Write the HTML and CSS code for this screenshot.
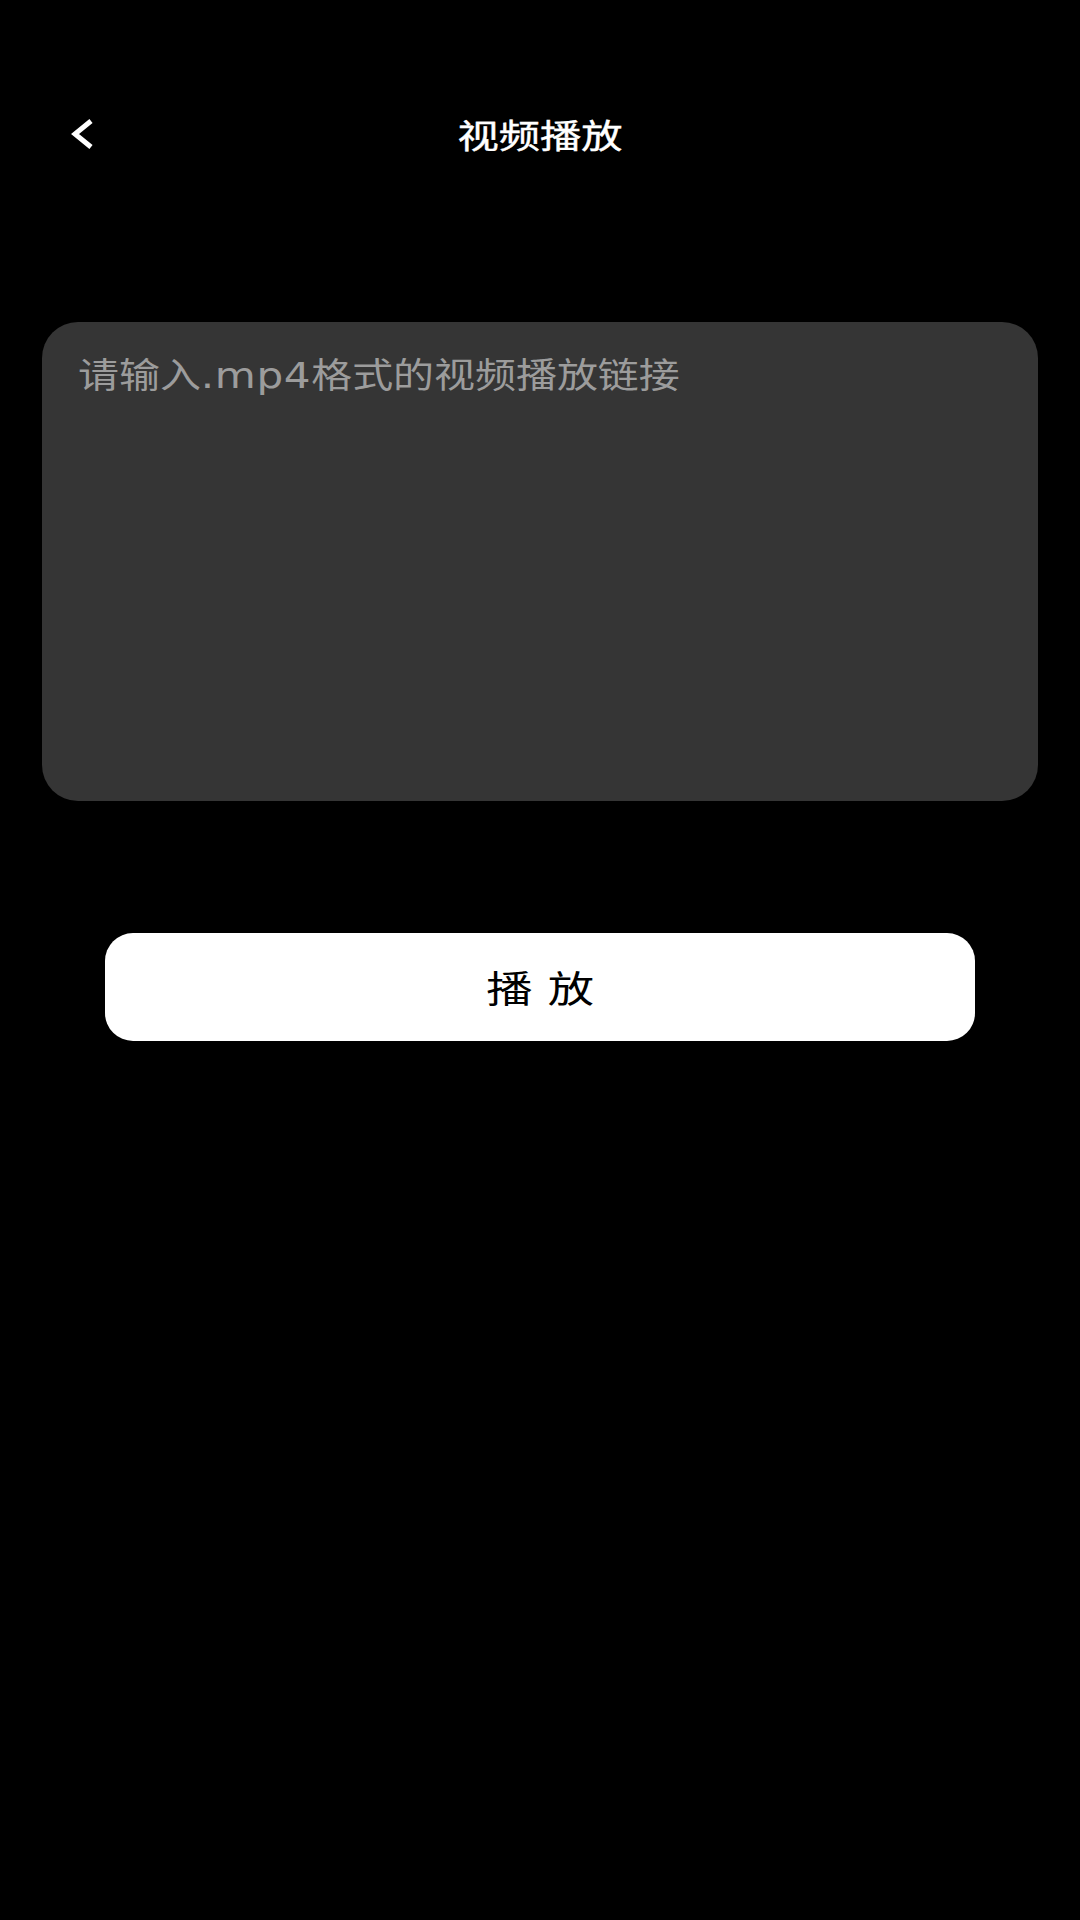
FILE: index.html
```html
<!DOCTYPE html>
<html lang="zh-CN">
<head>
<meta charset="utf-8">
<title>视频播放</title>
<link rel="stylesheet" href="styles.css">
</head>
<body>
<div class="page">
  <header class="nav">
    <span class="back" aria-label="返回">
      <svg width="34" height="40" viewBox="0 0 34 40">
        <polyline points="27,7 11,20 27,33" fill="none" stroke="#ffffff" stroke-width="5" stroke-linejoin="miter" stroke-linecap="butt"/>
      </svg>
    </span>
    <h1 class="title"><span class="stretch">视频播放</span></h1>
  </header>
  <div class="input-box">
    <p class="placeholder"><span class="ph-text">请输入<span class="latin">.mp4</span>格式的视频播放链接</span></p>
  </div>
  <div class="play-btn"><span class="stretch btn-text">播 放</span></div>
</div>
</body>
</html>
```
FILE: styles.css
```css
html, body {
  margin: 0;
  padding: 0;
  background: #000000;
}
body {
  width: 1080px;
  height: 1920px;
  font-family: "Noto Sans CJK SC", "Noto Sans", sans-serif;
  color: #ffffff;
}
.page {
  display: flex;
  flex-direction: column;
}
.nav {
  position: relative;
  margin-top: 90px;
  height: 88px;
  display: flex;
  align-items: center;
  justify-content: center;
}
.back {
  position: absolute;
  left: 64px;
  top: 24px;
  width: 34px;
  height: 40px;
  display: block;
}
.back svg {
  display: block;
}
.title {
  margin: 0;
  font-size: 33px;
  font-weight: 400;
  line-height: 44px;
  color: #ffffff;
  -webkit-text-stroke: 0.4px #ffffff;
}
.stretch {
  display: inline-block;
  transform: scaleX(1.25);
}
.input-box {
  margin: 144px 42px 0 42px;
  height: 479px;
  background: #353535;
  border-radius: 36px;
  padding: 26px 36px 0 36px;
  box-sizing: border-box;
}
.placeholder {
  margin: 0;
  font-size: 35px;
  line-height: 49px;
  color: #9c9c9c;
  white-space: nowrap;
}
.ph-text {
  display: inline-block;
  transform: scaleX(1.17);
  transform-origin: left center;
}
.latin {
  font-family: "DejaVu Sans", sans-serif;
  font-size: 36px;
  letter-spacing: 0.5px;
}
.play-btn {
  margin: 132px 105px 0 105px;
  height: 108px;
  background: #ffffff;
  border-radius: 28px;
  display: flex;
  align-items: center;
  justify-content: center;
}
.btn-text {
  font-size: 37px;
  line-height: 48px;
  color: #000000;
  word-spacing: 4px;
}
```
